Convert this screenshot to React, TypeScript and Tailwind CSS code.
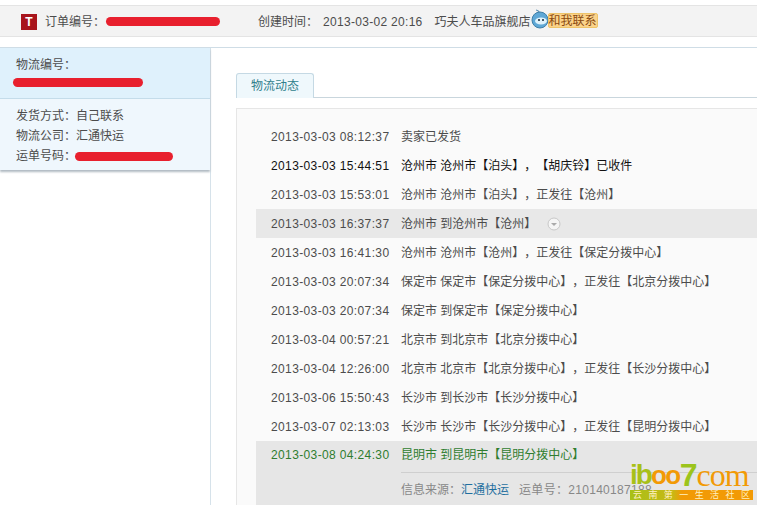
const rows: [string, string, string][] = [
  ["2013-03-03 08:12:37", "卖家已发货", "n"],
  ["2013-03-03 15:44:51", "沧州市 沧州市【泊头】，【胡庆铃】已收件", "b"],
  ["2013-03-03 15:53:01", "沧州市 沧州市【泊头】，正发往【沧州】", "n"],
  ["2013-03-03 16:37:37", "沧州市 到沧州市【沧州】", "h"],
  ["2013-03-03 16:41:30", "沧州市 沧州市【沧州】，正发往【保定分拨中心】", "n"],
  ["2013-03-03 20:07:34", "保定市 保定市【保定分拨中心】，正发往【北京分拨中心】", "n"],
  ["2013-03-03 20:07:34", "保定市 到保定市【保定分拨中心】", "n"],
  ["2013-03-04 00:57:21", "北京市 到北京市【北京分拨中心】", "n"],
  ["2013-03-04 12:26:00", "北京市 北京市【北京分拨中心】，正发往【长沙分拨中心】", "n"],
  ["2013-03-06 15:50:43", "长沙市 到长沙市【长沙分拨中心】", "n"],
  ["2013-03-07 02:13:03", "长沙市 长沙市【长沙分拨中心】，正发往【昆明分拨中心】", "n"],
];

function Smear({ className }: { className: string }) {
  return <span className={"block h-[9px] rounded-full bg-[#e8202e] " + className} />;
}

export default function App() {
  return (
    <div className="relative h-[505px] w-[757px] overflow-hidden bg-white font-['Liberation_Sans','Noto_Sans_CJK_SC',sans-serif] text-[12px] text-[#4c4c4c] [text-spacing-trim:space-all]">
      <div className="h-[5px]" />
      <header className="flex h-[32px] items-center border-y border-[#e4e4e4] bg-[#f3f3f3] pl-[21px] pt-[1px]">
        <span className="flex h-[16px] w-[16px] items-center justify-center bg-[#a8141c] text-[12px] font-bold leading-none text-white">T</span>
        <span className="ml-[8px]">订单编号：</span>
        <Smear className="ml-[1px] w-[114px]" />
        <span className="ml-[38px]">创建时间：</span>
        <span className="ml-[5px] tracking-[0.3px]">2013-03-02 20:16</span>
        <span className="ml-[12px]">巧夫人车品旗舰店</span>
        <svg width="18" height="20" viewBox="0 0 18 20" className="-mt-[6px]">
          <path d="M5 1 Q7 1 9 4" stroke="#5b8fb0" strokeWidth="1.2" fill="none" />
          <circle cx="9" cy="11" r="8" fill="#5fa8d6" stroke="#3f7fa8" />
          <ellipse cx="10" cy="12" rx="6" ry="3.5" fill="#dff2fb" />
          <circle cx="8" cy="11" r="1" fill="#123" />
          <circle cx="12" cy="11" r="1" fill="#123" />
        </svg>
        <span className="-ml-[1px] -mt-[2px] flex h-[15px] w-[50px] items-center justify-center rounded-[2px] border border-[#eec46a] bg-[#fbd38a] text-[12px] leading-none text-[#8a4a10]">和我联系</span>
      </header>

      <div className="mt-[10px] flex h-[458px] border-t border-[#cfdde6]">
        <aside className="w-[211px] shrink-0 border-r border-[#d6e2ea]">
          <div className="shadow-[0_2px_2px_#b0bac2]">
            <div className="h-[51px] border-b border-[#c4dcea] bg-[#dff1fc] pl-[16px] pt-[9px] leading-[16px]">
              <div>物流编号：</div>
              <Smear className="-ml-[3px] mt-[5px] w-[130px]" />
            </div>
            <div className="h-[71px] bg-[#eff7fd] pl-[16px] pt-[7px] leading-[20px]">
              <div>发货方式：自己联系</div>
              <div>物流公司：汇通快运</div>
              <div className="flex items-center">运单号码：<Smear className="-ml-[1px] w-[98px]" /></div>
            </div>
          </div>
        </aside>

        <main className="min-w-0 flex-1 pl-[25px] pt-[25px]">
          <div className="h-[25px] border-b border-[#c9d6dd]">
            <div className="flex h-[25px] w-[78px] items-center justify-center rounded-t-[3px] border border-b-0 border-[#c5d9e4] bg-[#eff8fc] text-[#2f7f8c]">物流动态</div>
          </div>
          <div className="mt-[10px] h-[400px] border-l border-t border-[#e6e6e6] bg-[#fafafa] pl-[19px] pt-[13px]">
            {rows.map(([t, m, k]) => (
              <div key={t + m} className={"flex h-[29px] items-center pl-[15px] " + (k === "h" ? "bg-[#e8e8e8]" : "")}>
                <span className={"w-[130px] shrink-0 whitespace-nowrap tracking-[0.37px] " + (k === "b" ? "text-[#111]" : "")}>{t}</span>
                <span className={"whitespace-nowrap " + (k === "b" ? "text-[#111]" : "")}>{m}</span>
                {k === "h" && (
                  <svg width="14" height="14" viewBox="0 0 14 14" className="ml-[11px]">
                    <circle cx="7" cy="7" r="6" fill="#f5f5f5" stroke="#c8c8c8" />
                    <path d="M4 6 H10 L7 9 Z" fill="#aaa" />
                  </svg>
                )}
              </div>
            ))}
            <div className="h-[64px] bg-[#e6e6e6] pl-[15px] pt-[6px] text-[#2f7d2f]">
              <div className="flex h-[16px] items-center">
                <span className="w-[130px] shrink-0 tracking-[0.37px]">2013-03-08 04:24:30</span>
                <span className="whitespace-nowrap">昆明市 到昆明市【昆明分拨中心】</span>
              </div>
              <div className="ml-[130px] mt-[9px] flex h-[34px] items-center border-t border-[#cfcfcf] text-[#888]">
                <span>信息来源：</span>
                <span className="text-[#1f6f9f]">汇通快运</span>
                <span className="ml-[10px] whitespace-nowrap tracking-[0.3px]">运单号：210140187188</span>
              </div>
            </div>
          </div>
        </main>
      </div>

      <div className="absolute left-[630px] top-[460px] w-[123px] font-['Liberation_Serif',serif] text-[#f29a05]">
        <div className="flex h-[30px] items-end whitespace-nowrap leading-[30px]">
          <span className="font-['Liberation_Sans',sans-serif] text-[28px] font-bold tracking-[-2px] text-[#a8c018]">ib</span>
          <span className="font-['Liberation_Sans',sans-serif] text-[26px] font-bold tracking-[-1.5px]">oo</span>
          <span className="font-['Liberation_Sans',sans-serif] text-[32px] font-bold tracking-[-1px] text-[#9cc41c]">7</span>
          <span className="text-[32px] tracking-[-1px]">com</span>
        </div>
        <div className="flex h-[10px] justify-between bg-[linear-gradient(90deg,#a8c018_0%,#c8b814_35%,#f29a05_42%)] px-[3px] font-['Noto_Sans_CJK_SC',sans-serif] text-[9px] leading-[10px] text-[#fff0c0]">
          <span>云</span><span>南</span><span>第</span><span>一</span><span>生</span><span>活</span><span>社</span><span>区</span>
        </div>
      </div>
    </div>
  );
}
